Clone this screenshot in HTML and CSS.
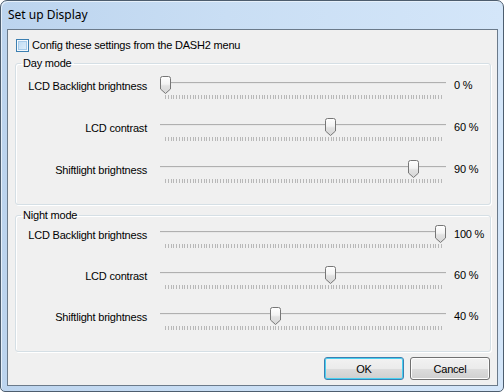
FILE: index.html
```html
<!DOCTYPE html>
<html lang="en">
<head>
    <meta charset="UTF-8">
    <title>Set up Display</title>
    <link rel="stylesheet" href="styles.css">
</head>
<body>
    <svg class="defs" width="0" height="0">
        <defs>
            <linearGradient id="thumbFill" x1="0" y1="0" x2="0" y2="1">
                <stop offset="0" stop-color="#ffffff"/>
                <stop offset="0.45" stop-color="#f3f3f3"/>
                <stop offset="0.55" stop-color="#e2e2e2"/>
                <stop offset="1" stop-color="#d6d6d6"/>
            </linearGradient>
        </defs>
    </svg>
    <div class="window">
        <div class="titlebar">Set up Display</div>
        <div class="client">
            <label class="check"><span class="box"></span>Config these settings from the DASH2 menu</label>

            <fieldset class="group">
                <legend>Day mode</legend>
                <div class="row">
                    <span class="name">LCD Backlight brightness</span>
                    <div class="slider">
                        <div class="track"></div>
                        <div class="rail"><svg class="thumb" style="left: 0%" width="11" height="18" viewBox="0 0 11 18"><path d="M0.5 2.5 A2 2 0 0 1 2.5 0.5 H8.5 A2 2 0 0 1 10.5 2.5 V13 L5.5 17.5 L0.5 13 Z"/></svg></div>
                        <div class="ticks"></div>
                    </div>
                    <span class="value">0 %</span>
                </div>
                <div class="row">
                    <span class="name">LCD contrast</span>
                    <div class="slider">
                        <div class="track"></div>
                        <div class="rail"><svg class="thumb" style="left: 60%" width="11" height="18" viewBox="0 0 11 18"><path d="M0.5 2.5 A2 2 0 0 1 2.5 0.5 H8.5 A2 2 0 0 1 10.5 2.5 V13 L5.5 17.5 L0.5 13 Z"/></svg></div>
                        <div class="ticks"></div>
                    </div>
                    <span class="value">60 %</span>
                </div>
                <div class="row">
                    <span class="name">Shiftlight brightness</span>
                    <div class="slider">
                        <div class="track"></div>
                        <div class="rail"><svg class="thumb" style="left: 90%" width="11" height="18" viewBox="0 0 11 18"><path d="M0.5 2.5 A2 2 0 0 1 2.5 0.5 H8.5 A2 2 0 0 1 10.5 2.5 V13 L5.5 17.5 L0.5 13 Z"/></svg></div>
                        <div class="ticks"></div>
                    </div>
                    <span class="value">90 %</span>
                </div>
            </fieldset>

            <fieldset class="group night">
                <legend>Night mode</legend>
                <div class="row">
                    <span class="name">LCD Backlight brightness</span>
                    <div class="slider">
                        <div class="track"></div>
                        <div class="rail"><svg class="thumb" style="left: 100%" width="11" height="18" viewBox="0 0 11 18"><path d="M0.5 2.5 A2 2 0 0 1 2.5 0.5 H8.5 A2 2 0 0 1 10.5 2.5 V13 L5.5 17.5 L0.5 13 Z"/></svg></div>
                        <div class="ticks"></div>
                    </div>
                    <span class="value">100 %</span>
                </div>
                <div class="row">
                    <span class="name">LCD contrast</span>
                    <div class="slider">
                        <div class="track"></div>
                        <div class="rail"><svg class="thumb" style="left: 60%" width="11" height="18" viewBox="0 0 11 18"><path d="M0.5 2.5 A2 2 0 0 1 2.5 0.5 H8.5 A2 2 0 0 1 10.5 2.5 V13 L5.5 17.5 L0.5 13 Z"/></svg></div>
                        <div class="ticks"></div>
                    </div>
                    <span class="value">60 %</span>
                </div>
                <div class="row">
                    <span class="name">Shiftlight brightness</span>
                    <div class="slider">
                        <div class="track"></div>
                        <div class="rail"><svg class="thumb" style="left: 40%" width="11" height="18" viewBox="0 0 11 18"><path d="M0.5 2.5 A2 2 0 0 1 2.5 0.5 H8.5 A2 2 0 0 1 10.5 2.5 V13 L5.5 17.5 L0.5 13 Z"/></svg></div>
                        <div class="ticks"></div>
                    </div>
                    <span class="value">40 %</span>
                </div>
            </fieldset>

            <div class="buttons">
                <button class="btn default">OK</button>
                <button class="btn">Cancel</button>
            </div>
        </div>
    </div>
</body>
</html>
```

FILE: styles.css
```css
body {
    margin: 0;
    background: #ffffff;
    font-family: "Liberation Sans", Arial, sans-serif;
    font-size: 11px;
    letter-spacing: -0.2px;
    color: #000;
}
.defs {
    position: absolute;
}
.window {
    width: 504px;
    height: 392px;
    box-sizing: border-box;
    border: 1px solid #4d5d6e;
    border-radius: 7px 7px 5px 5px;
    padding: 0 5px 0 6px;
    background: linear-gradient(90deg, #bcd4ee 0%, #c9def4 45%, #d4e6f9 100%);
    box-shadow: inset 1px 1px 0 #e6f0fa;
}
.titlebar {
    height: 28px;
    line-height: 28px;
    padding-left: 1px;
    font-family: "Noto Sans", "Open Sans", sans-serif;
    font-size: 12px;
    letter-spacing: 0;
    color: #000;
}
.client {
    width: 491px;
    height: 357px;
    box-sizing: border-box;
    border: 1px solid #6b7a8a;
    background: #f0f0f0;
    display: flex;
    flex-direction: column;
    padding: 8px 0 0 0;
}
.check {
    display: flex;
    align-items: center;
    height: 14px;
    margin-left: 8px;
    gap: 3px;
}
.box {
    width: 13px;
    height: 13px;
    box-sizing: border-box;
    border: 1px solid #3c7fb1;
    background: linear-gradient(135deg, #b9d9f3 0%, #e4f1fb 100%);
    box-shadow: inset 0 0 0 1px #f4f9fd, inset 0 0 0 2px #a7cbe9;
}
.group {
    width: 476px;
    box-sizing: border-box;
    margin: 5px 0 0 7px;
    padding: 6px 0 20px 0;
    border: 1px solid #d5dfe5;
    border-radius: 3px;
    box-shadow: inset 1px 1px 0 #fff, 1px 1px 0 #fff;
    display: flex;
    flex-direction: column;
    gap: 18px;
}
.group.night {
    margin-top: 4px;
    padding: 3px 0 20px 0;
    gap: 17px;
}
.group legend {
    margin-left: 5px;
    padding: 0 2px;
    line-height: 13px;
}
.row {
    display: grid;
    grid-template-columns: 131px 286px auto;
    column-gap: 13px;
    align-items: center;
    height: 24px;
}
.name {
    text-align: right;
    margin-top: -5px;
}
.value {
    margin-left: -5px;
    margin-top: -6px;
}
.slider {
    position: relative;
    height: 24px;
}
.track {
    position: absolute;
    top: 6px;
    left: 0;
    right: 0;
    height: 1px;
    border-top: 1px solid #b0b0b0;
    background: #e8e8e8;
}
.rail {
    position: relative;
    width: 275px;
    height: 18px;
}
.thumb {
    position: absolute;
    top: 0;
}
.thumb path {
    fill: url(#thumbFill);
    stroke: #767676;
    stroke-width: 1;
}
.ticks {
    position: absolute;
    left: 5px;
    top: 19px;
    width: 278px;
    height: 4px;
    background: repeating-linear-gradient(90deg, #b8b8b8 0 1px, transparent 1px 2.76px);
}
.buttons {
    display: flex;
    justify-content: flex-end;
    gap: 6px;
    margin: 5px 7px 0 0;
}
.btn {
    width: 80px;
    height: 23px;
    box-sizing: border-box;
    border: 1px solid #707070;
    border-radius: 3px;
    background: linear-gradient(#f2f2f2 0%, #ebebeb 50%, #dddddd 51%, #cfcfcf 100%);
    box-shadow: inset 0 0 0 1px #fcfcfc;
    font-family: "Liberation Sans", Arial, sans-serif;
    font-size: 11px;
    letter-spacing: -0.2px;
    color: #000;
    padding: 0;
}
.btn.default {
    border-color: #3c7fb1;
    box-shadow: inset 0 0 0 1px #48d0f0;
}
```
